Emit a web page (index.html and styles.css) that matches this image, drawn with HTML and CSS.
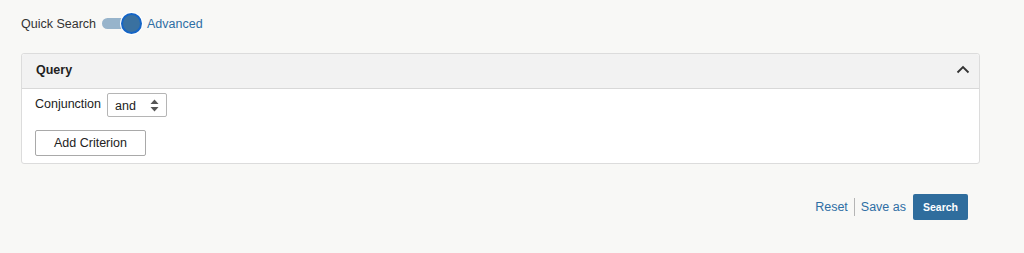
FILE: index.html
```html
<!DOCTYPE html>
<html>
<head>
<meta charset="utf-8">
<link rel="stylesheet" href="styles.css">
</head>
<body>
<div class="page">
  <div class="mode">
    <span class="mode-label">Quick Search</span>
    <span class="toggle"><span class="track"></span><span class="knob"></span></span>
    <a class="link mode-link">Advanced</a>
  </div>
  <div class="panel">
    <div class="panel-head">
      <span class="panel-title">Query</span>
      <svg class="chevron" width="14" height="9" viewBox="0 0 14 9"><path d="M1.5 7.5 L7 2 L12.5 7.5" fill="none" stroke="#333" stroke-width="1.8"/></svg>
    </div>
    <div class="panel-body">
      <div class="conj">
        <span class="conj-label">Conjunction</span>
        <span class="select">
          <span class="select-text">and</span>
          <svg width="9" height="13" viewBox="0 0 9 13"><path d="M4.5 0.5 L8.5 5 L0.5 5 Z" fill="#555"/><path d="M4.5 12.5 L8.5 8 L0.5 8 Z" fill="#555"/></svg>
        </span>
      </div>
      <button class="btn">Add Criterion</button>
    </div>
  </div>
  <div class="footer">
    <a class="link">Reset</a>
    <span class="sep"></span>
    <a class="link">Save as</a>
    <button class="primary">Search</button>
  </div>
</div>
</body>
</html>
```

FILE: styles.css
```css
html, body {
  margin: 0;
  background: #f8f8f6;
  font-family: "Liberation Sans", Arial, Helvetica, sans-serif;
  font-size: 12.5px;
  color: #222;
}
.page {
  padding: 13px 44px 0 21px;
}
.mode {
  display: flex;
  align-items: center;
  height: 22px;
}
.mode-label {
  color: #333;
}
.toggle {
  position: relative;
  width: 41px;
  height: 22px;
  margin-left: 6px;
  margin-right: 4px;
}
.track {
  position: absolute;
  left: 0;
  top: 5px;
  width: 30px;
  height: 11px;
  border-radius: 6px;
  background: #97b4cb;
}
.knob {
  position: absolute;
  left: 19px;
  top: 0;
  width: 17px;
  height: 17px;
  border-radius: 50%;
  background: #3a71a0;
  border: 2px solid #1565c6;
  box-shadow: 0 0 0 1px #fff;
}
.link {
  color: #2e6ea4;
  cursor: pointer;
}
.panel {
  margin-top: 18px;
  width: 957px;
  border: 1px solid #dcdcdc;
  border-radius: 3px;
  background: #fff;
}
.panel-head {
  display: flex;
  align-items: center;
  justify-content: space-between;
  height: 34px;
  padding: 0 9px 0 14px;
  background: #f2f2f2;
  border-bottom: 1px solid #d8d8d8;
  border-radius: 3px 3px 0 0;
}
.panel-title {
  font-weight: bold;
  color: #222;
  margin-top: -2px;
}
.chevron {
  margin-top: -3px;
}
.panel-body {
  padding: 4px 13px 7px;
}
.conj {
  display: flex;
  align-items: center;
}
.conj-label {
  color: #222;
  margin-right: 6px;
  margin-top: -2px;
}
.select {
  display: flex;
  align-items: center;
  justify-content: space-between;
  box-sizing: border-box;
  width: 60px;
  height: 24px;
  padding: 0 7px 0 7px;
  border: 1px solid #b5b5b5;
  border-radius: 2px;
  background: #fff;
}
.select-text {
  color: #222;
  margin-top: 2px;
}
.btn {
  display: block;
  margin-top: 13px;
  box-sizing: border-box;
  width: 111px;
  height: 26px;
  font-family: inherit;
  font-size: 12.5px;
  color: #222;
  background: #fff;
  border: 1px solid #a9a9a9;
  border-radius: 2px;
  padding: 0;
}
.footer {
  display: flex;
  align-items: center;
  justify-content: flex-end;
  margin-top: 30px;
  margin-right: 12px;
}
.sep {
  width: 1px;
  height: 18px;
  background: #b5b5b5;
  margin: 0 6px 0 6px;
}
.primary {
  margin-left: 7px;
  box-sizing: border-box;
  width: 55px;
  height: 26px;
  padding: 0;
  font-family: inherit;
  font-size: 10.5px;
  font-weight: bold;
  color: #fff;
  background: #2f6d9d;
  border: none;
  border-radius: 2px;
}
```
